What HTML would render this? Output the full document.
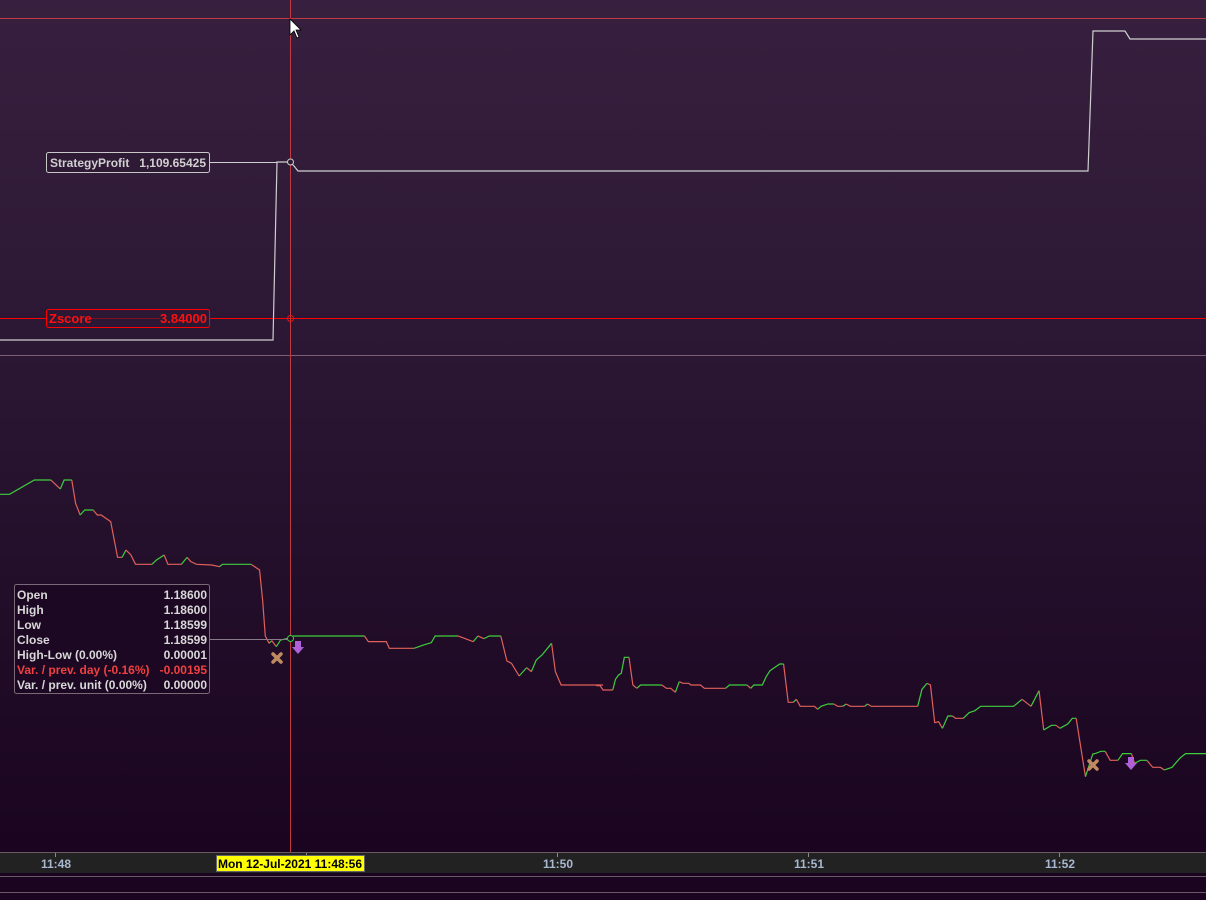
<!DOCTYPE html>
<html><head><style>
html,body{margin:0;padding:0;width:1206px;height:900px;overflow:hidden;background:#1a0420}
svg{display:block}
text{font-family:"Liberation Sans",sans-serif;font-weight:bold;font-size:12px}
.r{fill:none;stroke:#e0605a;stroke-width:1.2;vector-effect:non-scaling-stroke}
.g{fill:none;stroke:#3ccf3c;stroke-width:1.2;vector-effect:non-scaling-stroke}
</style></head><body>
<svg width="1206" height="900" viewBox="0 0 1206 900">
<defs><linearGradient id="bg" x1="0" y1="0" x2="0" y2="1">
<stop offset="0" stop-color="#37203f"/><stop offset="0.45" stop-color="#2a1632"/><stop offset="1" stop-color="#1a0420"/></linearGradient></defs>
<rect width="1206" height="852" fill="url(#bg)"/>
<line x1="0" y1="18.5" x2="1206" y2="18.5" stroke="#c03a44" stroke-width="1"/>
<line x1="0" y1="318.5" x2="1206" y2="318.5" stroke="#ff0000" stroke-width="1"/>
<line x1="0" y1="355.5" x2="1206" y2="355.5" stroke="#7a6070" stroke-width="1"/>
<polyline fill="none" stroke="#cfcfcf" stroke-width="1.2" points="0,340 273,340 277,162 290,162 294,166 298,171 1088,171 1093,31 1125,31 1130,39 1206,39"/>
<line x1="210" y1="162.5" x2="277" y2="162.5" stroke="#cfcfcf"/>
<rect x="46.5" y="152.5" width="163" height="20" rx="2" fill="#2f1a36" stroke="#c8c8c8"/>
<text x="50" y="167" fill="#d0d0d0">StrategyProfit</text>
<text x="206" y="167" fill="#d0d0d0" text-anchor="end">1,109.65425</text>
<rect x="46.5" y="309.5" width="163" height="18" rx="2" fill="#2c1834" stroke="#ff0000"/>
<line x1="90" y1="318.5" x2="160" y2="318.5" stroke="#7a1020"/>
<text x="49" y="323" fill="#ff1010" style="font-size:13px">Zscore</text>
<text x="207" y="323" fill="#ff1010" text-anchor="end" style="font-size:13px">3.84000</text>
<line x1="290.5" y1="0" x2="290.5" y2="852" stroke="#c03a44" stroke-width="1"/>
<circle cx="290.5" cy="162" r="3" fill="#2f1a36" stroke="#cfcfcf"/>
<circle cx="290.5" cy="318.5" r="3" fill="none" stroke="#e01818"/>
<g transform="translate(0,470) scale(0.3817,0.3333)">
<polyline class="g" points="0,73 25,73 90,30 133,30"/>
<polyline class="r" points="133,30 158,57"/>
<polyline class="g" points="158,57 168,30 188,30"/>
<polyline class="r" points="188,30 198,100 210,135"/>
<polyline class="g" points="210,135 222,120 244,120"/>
<polyline class="r" points="244,120 255,135 265,135 290,155 308,262 320,262"/>
<polyline class="g" points="320,262 330,240"/>
<polyline class="r" points="330,240 343,255 355,283 398,283"/>
<polyline class="g" points="398,283 410,270 430,255"/>
<polyline class="r" points="430,255 440,283 475,283"/>
<polyline class="g" points="475,283 490,262"/>
<polyline class="r" points="490,262 500,275 515,283 555,285 575,290"/>
<polyline class="g" points="575,290 583,283 658,283"/>
<polyline class="r" points="658,283 680,300 688,390 695,498 705,520"/>
<polyline class="g" points="705,520 712,512"/>
<polyline class="r" points="712,512 724,530"/>
<polyline class="g" points="724,530 735,510 755,505"/>
<polyline class="g" points="767,498 955,498"/>
<polyline class="r" points="955,498 965,515 1012,515 1020,535 1085,535"/>
<polyline class="g" points="1085,535 1110,525 1130,518 1140,498 1200,498"/>
<polyline class="r" points="1200,498 1240,515"/>
<polyline class="g" points="1240,515 1252,498"/>
<polyline class="r" points="1252,498 1268,506"/>
<polyline class="g" points="1268,506 1282,498 1312,498"/>
<polyline class="r" points="1312,498 1328,573 1340,580 1360,618"/>
<polyline class="g" points="1360,618 1380,593"/>
<polyline class="r" points="1380,593 1392,605"/>
<polyline class="g" points="1392,605 1405,570 1420,555 1445,520"/>
<polyline class="r" points="1445,520 1455,605 1470,645 1580,645"/>
</g>
<g transform="translate(600,640) scale(0.3865,0.3333)">
<polyline class="r" points="-10,137 0,137 8,150 33,150"/>
<polyline class="g" points="33,150 40,118 48,105 55,100 63,52 75,52"/>
<polyline class="r" points="75,52 85,135 95,145"/>
<polyline class="g" points="95,145 105,135 160,135"/>
<polyline class="r" points="160,135 172,145 183,145 195,157"/>
<polyline class="g" points="195,157 205,125"/>
<polyline class="r" points="205,125 215,130 230,130 235,135 260,135 270,145 325,145"/>
<polyline class="g" points="325,145 335,135 380,135"/>
<polyline class="r" points="380,135 390,145"/>
<polyline class="g" points="390,145 398,135 420,135 430,110 440,92 465,72 475,72"/>
<polyline class="r" points="475,72 487,187 500,187"/>
<polyline class="g" points="500,187 508,178"/>
<polyline class="r" points="508,178 518,199 555,199 563,208"/>
<polyline class="g" points="563,208 572,199 590,192 605,192"/>
<polyline class="r" points="605,192 615,199 628,199"/>
<polyline class="g" points="628,199 637,192"/>
<polyline class="r" points="637,192 648,199 685,199"/>
<polyline class="g" points="685,199 692,192"/>
<polyline class="r" points="692,192 702,199 822,199"/>
<polyline class="g" points="822,199 833,148 846,130"/>
<polyline class="r" points="846,130 855,135 866,248 876,245 886,265"/>
<polyline class="g" points="886,265 900,228 912,228"/>
<polyline class="r" points="912,228 920,235 940,235"/>
<polyline class="g" points="940,235 955,218 970,212 985,199 1070,199 1092,178"/>
<polyline class="r" points="1092,178 1115,199"/>
<polyline class="g" points="1115,199 1136,152"/>
<polyline class="r" points="1136,152 1148,270"/>
<polyline class="g" points="1148,270 1168,256 1180,256"/>
<polyline class="r" points="1180,256 1190,265"/>
<polyline class="g" points="1190,265 1210,252 1222,235 1232,235"/>
<polyline class="r" points="1232,235 1256,410"/>
<polyline class="g" points="1256,410 1275,342 1283,340 1296,334 1307,334"/>
<polyline class="r" points="1307,334 1320,361 1340,361"/>
<polyline class="g" points="1340,361 1352,341 1375,341"/>
<polyline class="r" points="1375,341 1383,370"/>
<polyline class="g" points="1383,370 1398,361 1415,361"/>
<polyline class="r" points="1415,361 1430,382 1450,382 1460,390"/>
<polyline class="g" points="1460,390 1480,382 1500,355 1515,341 1580,341"/>
</g>
<line x1="210" y1="639.5" x2="287" y2="639.5" stroke="#8a7a88"/>
<circle cx="290.5" cy="638.5" r="3" fill="#1e0a24" stroke="#3ccf3c"/>
<g stroke="#c08a60" stroke-width="3.5" stroke-linecap="round">
<path d="M273,654 L281,662 M281,654 L273,662"/>
<path d="M1089,761 L1097,769 M1097,761 L1089,769"/></g>
<g fill="#b060d8"><path d="M295,641 h6 v6 h3 l-6,7 l-6,-7 h3z"/><path d="M1128,757 h6 v6 h3 l-6,7 l-6,-7 h3z"/></g>
<rect x="14.5" y="584.5" width="195" height="109" rx="2" fill="#1c0822" stroke="#7a6a78"/>
<g fill="#d8d8d8"><text x="17" y="599">Open</text><text x="17" y="614">High</text><text x="17" y="629">Low</text><text x="17" y="644">Close</text><text x="17" y="659">High-Low (0.00%)</text><text x="17" y="689">Var. / prev. unit (0.00%)</text></g>
<g fill="#d8d8d8" text-anchor="end"><text x="207" y="599">1.18600</text><text x="207" y="614">1.18600</text><text x="207" y="629">1.18599</text><text x="207" y="644">1.18599</text><text x="207" y="659">0.00001</text><text x="207" y="689">0.00000</text></g>
<text x="17" y="674" fill="#f04040">Var. / prev. day (-0.16%)</text>
<text x="207" y="674" fill="#f04040" text-anchor="end">-0.00195</text>
<rect x="0" y="852" width="1206" height="21" fill="#222222"/>
<line x1="0" y1="852.5" x2="1206" y2="852.5" stroke="#6a5a66"/>
<rect x="0" y="873" width="1206" height="27" fill="#1a0420"/>
<line x1="0" y1="876.5" x2="1206" y2="876.5" stroke="#6a5a66"/>
<line x1="0" y1="892.5" x2="1206" y2="892.5" stroke="#6a5a66"/>
<g stroke="#8a8a8a"><line x1="55.5" y1="853" x2="55.5" y2="857"/><line x1="306.5" y1="853" x2="306.5" y2="857"/><line x1="557.5" y1="853" x2="557.5" y2="857"/><line x1="808.5" y1="853" x2="808.5" y2="857"/><line x1="1059.5" y1="853" x2="1059.5" y2="857"/></g>
<g fill="#a8b8d0" text-anchor="middle"><text x="56" y="868">11:48</text><text x="558" y="868">11:50</text><text x="809" y="868">11:51</text><text x="1060" y="868">11:52</text></g>
<rect x="216.5" y="855.5" width="148" height="16" fill="#ffff00" stroke="#666"/>
<text x="290" y="868" fill="#000" text-anchor="middle">Mon 12-Jul-2021 11:48:56</text>
<path d="M290,19 L290,35 L294,31 L297,38 L299,37 L296,30 L301,30Z" fill="#fff" stroke="#000" stroke-width="0.8"/>
</svg>
</body></html>
